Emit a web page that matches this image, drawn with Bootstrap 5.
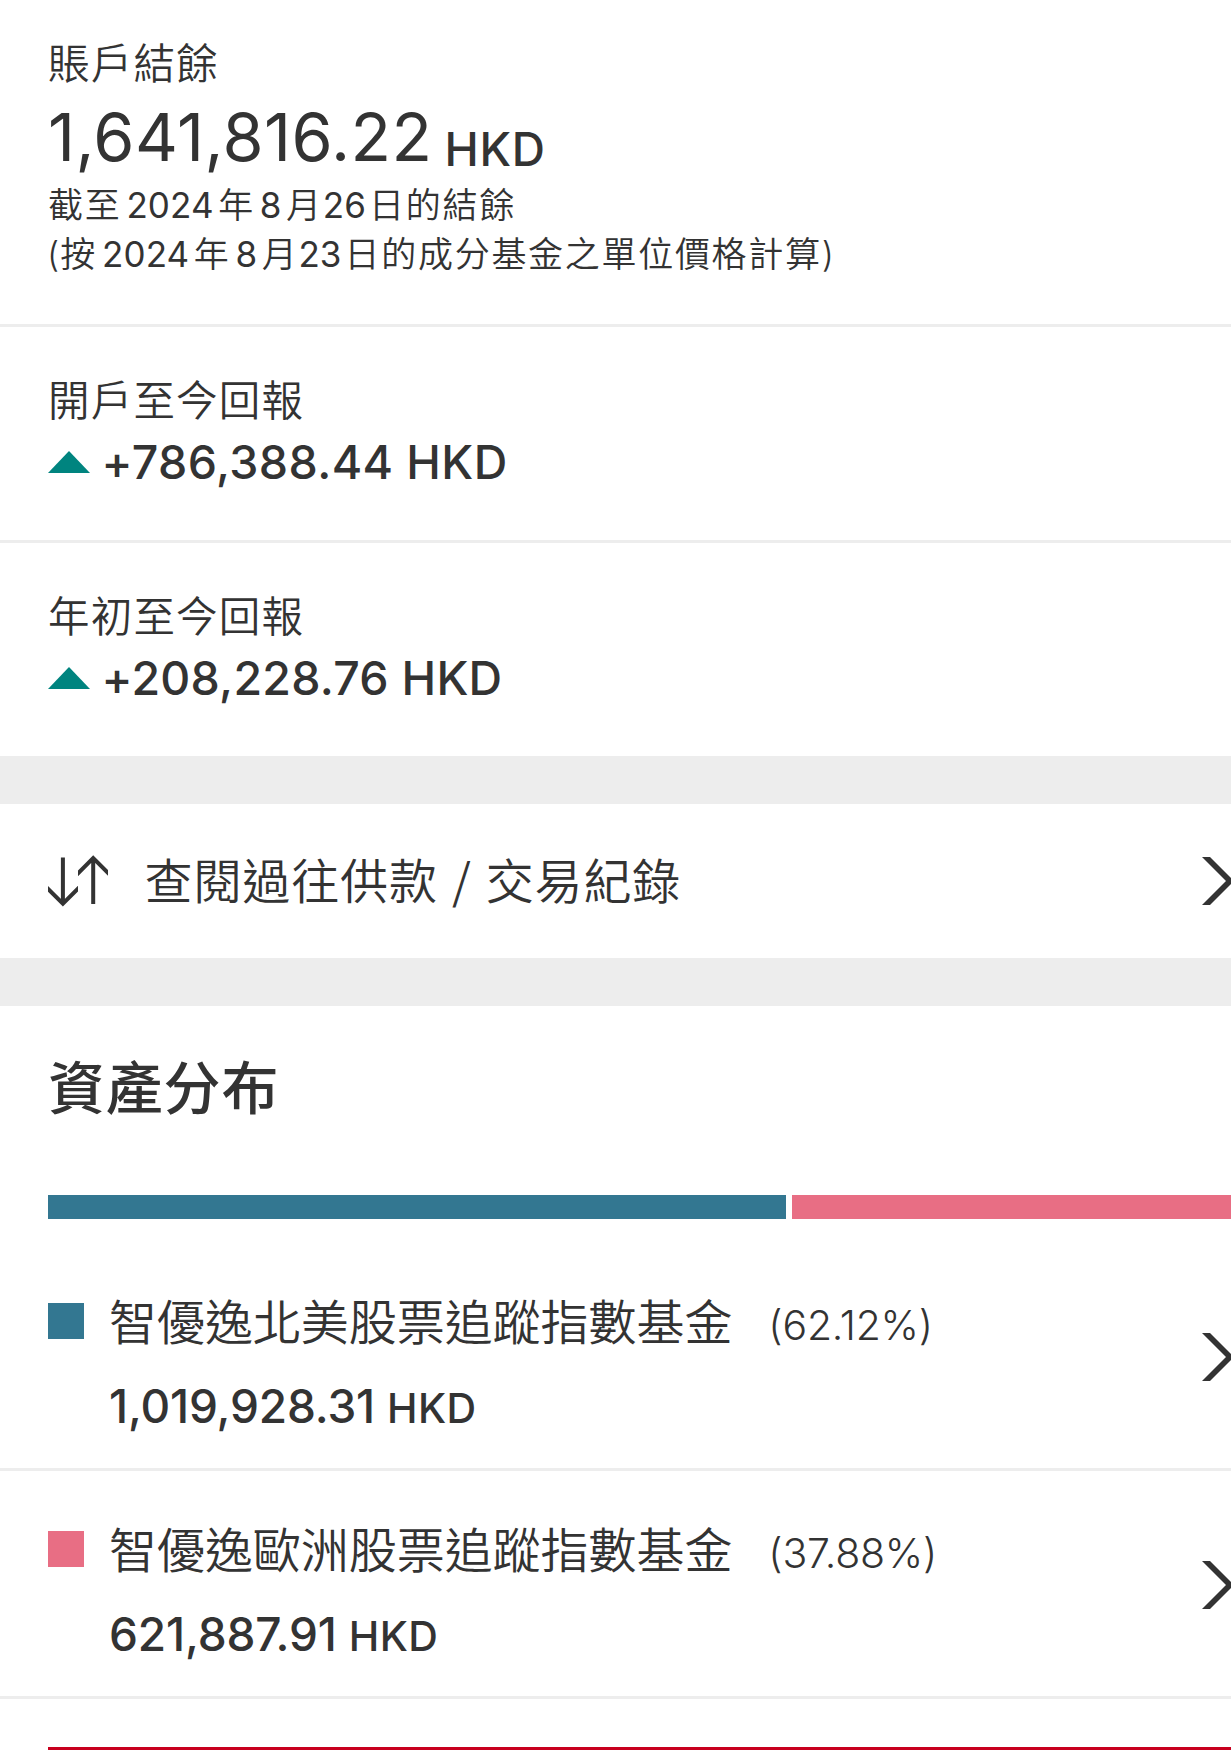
<!DOCTYPE html>
<html lang="zh-Hant-HK">
<head>
<meta charset="utf-8">
<meta name="viewport" content="width=device-width, initial-scale=1">
<title>賬戶結餘</title>
<link href="https://cdn.jsdelivr.net/npm/bootstrap@5.3.0/dist/css/bootstrap.min.css" rel="stylesheet">
<style>
  body { font-family: Inter, "Noto Sans CJK TC", sans-serif; color: #333; background: #fff; height: 1750px; overflow: hidden; font-kerning: normal; }
  .pane { padding-left: 48px; }
  .pane-balance { height: 327px; padding-top: 34px; border-bottom: 3px solid #ededed; }
  .pane-return { height: 216px; padding-top: 44px; border-bottom: 3px solid #ededed; }
  .pane-return.last { height: 213px; border-bottom: 0; }
  .gap-band { height: 48px; background: #ededed; }
  .caption { font-size: 41.5px; line-height: 60px; letter-spacing: 1.2px; font-weight: 350; }
  .total-row { height: 80px; margin-top: 7px; }
  .total { font-size: 66.5px; line-height: 72px; letter-spacing: .4px; }
  .total-unit { font-size: 46px; line-height: 60px; font-weight: 500; margin: 18px 0 0 12px; letter-spacing: .8px; }
  .asof { font-size: 35px; line-height: 49px; letter-spacing: 1.7px; white-space: nowrap; font-weight: 350; }
  .asof span { margin: 0 4.500px 0 5px; letter-spacing: .1px; font-weight: 400; }
  .asof .day { margin: 0 3px 0 0; }
  .asof .paren { margin: 0 1px 0 -1px; font-weight: 350; }
  .change { font-size: 46.5px; line-height: 60px; font-weight: 500; margin-top: 1px; letter-spacing: .4px; }
  .last .change { letter-spacing: .25px; }
  .change svg { margin: 0 11.500px 0 0; }
  .history { height: 154px; color: inherit; font-size: 48px; line-height: 60px; letter-spacing: .9px; font-weight: 350; }
  .history .label { margin: 1px 0 0 36.500px; }
  .history .slash { font-family: "Noto Sans CJK TC", sans-serif; line-height: 1; margin: 0 14px 0 14px; }
  .chev { width: 29px; height: 48px; flex: none; }
  .pane-assets { padding-top: 43px; }
  .asset-title { font-size: 57px; line-height: 80px; font-weight: 500; margin: 0 0 66px; letter-spacing: .8px; }
  .alloc { height: 24px; gap: 6px; margin-bottom: 24px; }
  .blue { background: #337791; }
  .pink { background: #e86e84; }
  .fund { height: 228px; padding: 50px 0 0 48px; border-bottom: 3px solid #ededed; }
  .swatch { width: 36px; height: 36px; margin: 10px 25px 0 0; flex: none; }
  .fund-name { font-size: 48px; line-height: 60px; white-space: nowrap; letter-spacing: -.05px; font-weight: 350; }
  .share { font-size: 41px; font-weight: 300; margin-left: 36px; letter-spacing: -.2px; }
  .worth { font-size: 46px; line-height: 60px; font-weight: 500; margin-top: 21px; letter-spacing: -.15px; }
  .worth .unit { font-size: 41px; font-weight: 450; letter-spacing: .4px; margin-left: 12px; }
  .fund .chev { margin-top: 40px; }
  .red-edge { height: 3px; margin: 48px 0 0 48px; background: #c8001e; }
</style>
</head>
<body>
<main>
  <section class="pane pane-balance">
    <div class="caption">賬戶結餘</div>
    <div class="total-row d-flex align-items-start">
      <div class="total">1,641,816.22</div><div class="total-unit">HKD</div>
    </div>
    <div class="asof">截至<span>2024</span>年<span>8</span>月<span class="day">26</span>日的結餘</div>
    <div class="asof"><span class="paren">(</span>按<span>2024</span>年<span>8</span>月<span class="day">23</span>日的成分基金之單位價格計算)</div>
  </section>

  <section class="pane pane-return">
    <div class="caption">開戶至今回報</div>
    <div class="change d-flex align-items-center">
      <svg width="42" height="22" viewBox="0 0 42 22"><path d="M21 0 42 22H0z" fill="#00847f"/></svg>
      <span>+786,388.44 HKD</span>
    </div>
  </section>

  <section class="pane pane-return last">
    <div class="caption">年初至今回報</div>
    <div class="change d-flex align-items-center">
      <svg width="42" height="22" viewBox="0 0 42 22"><path d="M21 0 42 22H0z" fill="#00847f"/></svg>
      <span>+208,228.76 HKD</span>
    </div>
  </section>

  <div class="gap-band"></div>
  <a href="#" class="pane history d-flex align-items-center text-decoration-none">
    <svg width="60" height="52" viewBox="0 0 60 52" fill="none" stroke="#333" stroke-width="4">
      <clipPath id="left"><path d="M0 0H30V52H0z"/></clipPath>
      <clipPath id="right"><path d="M30 0H60V52H30z"/></clipPath>
      <path clip-path="url(#left)" d="M14.900 2.500V48M-5 28.800 14.900 48.700 34.800 28.800"/>
      <path clip-path="url(#right)" d="M45.200 49V4M25.300 23 45.200 3.100 65.100 23"/>
    </svg>
    <span class="label">查閱過往供款<span class="slash">/</span>交易紀錄</span>
    <svg class="chev ms-auto" viewBox="0 0 29 48"><path d="M0 0H8L32 24 8 48H0L24 24z" fill="#333"/></svg>
  </a>
  <div class="gap-band"></div>

  <section>
    <div class="pane pane-assets">
      <h2 class="asset-title">資產分布</h2>
      <div class="alloc d-flex">
        <div class="blue" style="width:738px"></div>
        <div class="pink flex-grow-1"></div>
      </div>
    </div>
    <div class="fund d-flex align-items-start">
      <div class="swatch blue"></div>
      <div>
        <div class="fund-name">智優逸北美股票追蹤指數基金<span class="share">(62.12%)</span></div>
        <div class="worth">1,019,928.31<span class="unit">HKD</span></div>
      </div>
      <svg class="chev ms-auto" viewBox="0 0 29 48"><path d="M0 0H8L32 24 8 48H0L24 24z" fill="#333"/></svg>
    </div>
    <div class="fund d-flex align-items-start">
      <div class="swatch pink"></div>
      <div>
        <div class="fund-name">智優逸歐洲股票追蹤指數基金<span class="share">(37.88%)</span></div>
        <div class="worth">621,887.91<span class="unit">HKD</span></div>
      </div>
      <svg class="chev ms-auto" viewBox="0 0 29 48"><path d="M0 0H8L32 24 8 48H0L24 24z" fill="#333"/></svg>
    </div>
    <div class="red-edge"></div>
  </section>
</main>
<script src="https://cdn.jsdelivr.net/npm/bootstrap@5.3.0/dist/js/bootstrap.bundle.min.js"></script>
</body>
</html>
